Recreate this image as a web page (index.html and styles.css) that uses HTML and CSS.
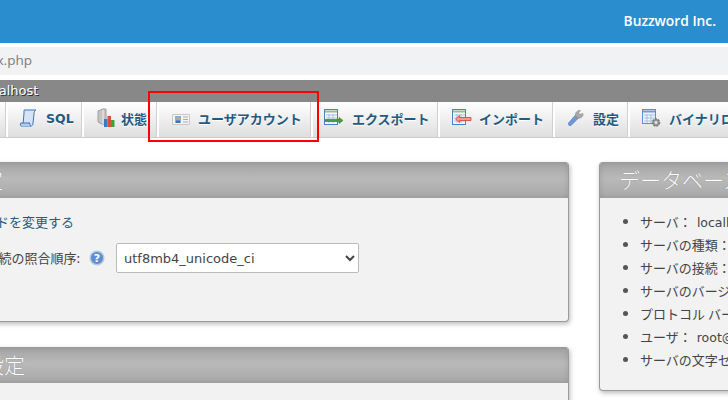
FILE: index.html
```html
<!DOCTYPE html>
<html lang="ja">
<head>
<meta charset="utf-8">
<title>phpMyAdmin</title>
<link rel="stylesheet" href="styles.css">
</head>
<body>
<div class="page">
  <header class="brand"><span>Buzzword Inc.</span></header>
  <div class="url"><span>index.php</span></div>
  <div class="crumb"><span>localhost</span></div>
  <nav class="tabs">
    <a class="tab tab-first"></a>
    <a class="tab tab-sql"><svg width="20" height="20" viewBox="0 0 20 20"><path d="M5 2h12c-1.500 1-2 2-2 4l-1 9c0 2-1 3-2 3H2c1.500-.5 2-1.500 2.200-3L5 5c.1-1.500 0-2.500 0-3z" fill="#d5e3f7" stroke="#3f74b8"/><path d="M2 18c-1-1-1-3 0-3h9c-.5 1-.5 2 1 3" fill="#b3cbec" stroke="#3f74b8"/></svg><b>SQL</b></a>
    <a class="tab tab-status"><svg width="20" height="20" viewBox="0 0 20 20"><path d="M2 3l5-2h3v15H6l-4-2z" fill="#c4c4c4" stroke="#a0a0a0"/><path d="M7 2v14" stroke="#eee"/><rect x="8" y="11" width="3.500" height="8" fill="#3b78c9"/><rect x="11.500" y="8" width="3.500" height="11" fill="#d8503a"/><rect x="15" y="12" width="3.500" height="7" fill="#42a03f"/></svg><b>状態</b></a>
    <a class="tab tab-user"><svg width="18" height="14" viewBox="0 0 18 14"><path d="M.5 2.500h17v10h-17z" fill="#f4f4f4" stroke="#c8c8c8"/><rect x="3" y="4" width="6" height="7" fill="#7fb0de"/><circle cx="6" cy="6.500" r="1.500" fill="#d9a074"/><rect x="4" y="8.500" width="4" height="2.500" fill="#3d75b4"/><path d="M11 5h5M11 7.500h5M11 10h5" stroke="#a9a9a9"/></svg><b>ユーザアカウント</b></a>
    <a class="tab tab-export"><svg width="20" height="18" viewBox="0 0 20 18"><rect x=".5" y=".5" width="13" height="15" fill="#f3f7fb" stroke="#4d80c4"/><path d="M1 2.500h12" stroke="#9ac27a" stroke-width="2"/><path d="M2 6h11M2 9h11M2 12h11M5 5v9M9 5v9" stroke="#a9c1de"/><path d="M1 10.500h14v-2l4 3-4 3v-2H1z" fill="#4d9b45" stroke="#2f7a2f" stroke-width=".6"/></svg><b>エクスポート</b></a>
    <a class="tab tab-import"><svg width="20" height="18" viewBox="0 0 20 18"><rect x=".5" y=".5" width="13" height="15" fill="#f3f7fb" stroke="#4d80c4"/><path d="M1 2.500h12" stroke="#9ac27a" stroke-width="2"/><path d="M2 6h11M2 9h11M2 12h11M5 5v9M9 5v9" stroke="#a9c1de"/><path d="M19 8.500H7.500v-2l-4 3.500 4 3.500v-2H19z" fill="#f29a9a" stroke="#d93a3a" stroke-width=".8"/></svg><b>インポート</b></a>
    <a class="tab tab-settings"><svg width="18" height="18" viewBox="0 0 18 18"><path d="M1.500 14l7-8 3 3-7.500 7.500c-2 .5-3-.5-2.500-2.500z" fill="#6f97d8" stroke="#4b74b8" stroke-width=".6"/><path d="M8.500 6.500c-.5-3 2-5.500 5-5l-2 2.500 1.500 1.500 3-1c.5 3-2.500 5.500-5.500 4.500z" fill="#a8a8a8" stroke="#868686" stroke-width=".6"/></svg><b>設定</b></a>
    <a class="tab tab-binlog"><svg width="20" height="19" viewBox="0 0 20 19"><rect x=".5" y=".5" width="13" height="14" fill="#eef3fa" stroke="#5b8ccc"/><path d="M1 2.500h12" stroke="#6f9bd6" stroke-width="2"/><path d="M2 6h11M2 9h11M2 12h11M5 5v9M9 5v9" stroke="#a9c1de"/><circle cx="14" cy="13.500" r="3.500" fill="#9a9a9a" stroke="#777" stroke-width="1.500" stroke-dasharray="2 1"/><circle cx="14" cy="13.500" r="1.300" fill="#eee"/></svg><b>バイナリログ</b></a>
  </nav>
  <main class="columns">
    <div class="col-left">
      <section class="panel panel-general">
        <h2>一般設定</h2>
        <div class="panel-body">
          <p class="link">パスワードを変更する</p>
          <form class="field">
            <label>サーバ接続の照合順序:</label>
            <svg class="help" width="16" height="16" viewBox="0 0 16 16"><circle cx="8" cy="8" r="6.800" fill="#5f8fd0" stroke="#b4c8e0" stroke-width="1.400"/><text x="8" y="11.500" text-anchor="middle" class="help-q">?</text></svg>
            <select><option>utf8mb4_unicode_ci</option></select>
          </form>
        </div>
      </section>
      <section class="panel panel-look">
        <h2>外観の設定</h2>
        <div class="panel-body"></div>
      </section>
    </div>
    <section class="panel panel-db">
      <h2>データベースサーバ</h2>
      <ul>
        <li>サーバ：<span class="val">localhost via TCP/IP</span></li>
        <li>サーバの種類：<span class="val">MariaDB</span></li>
        <li>サーバの接続：<span class="val">SSL は使われていません</span></li>
        <li>サーバのバージョン：<span class="val">10.4.21-MariaDB</span></li>
        <li>プロトコル バージョン：<span class="val">10</span></li>
        <li>ユーザ：<span class="val">root@localhost</span></li>
        <li>サーバの文字セット：<span class="val">UTF-8 Unicode</span></li>
      </ul>
    </section>
  </main>
  <div class="highlight"></div>
</div>
</body>
</html>
```
FILE: styles.css
```css
* { box-sizing: border-box; }
html, body { margin: 0; padding: 0; background: #fff; overflow: hidden; }
body { width: 728px; height: 400px; font-family: "Noto Sans CJK JP", "DejaVu Sans", sans-serif; }
.page { position: relative; width: 728px; height: 400px; overflow: hidden; }

.brand { height: 43px; background: #2a8dcd; display: flex; justify-content: flex-end; align-items: center; padding: 0 12px 0 0; color: #fff; }
.brand span { font: 600 13.800px "Open Sans", sans-serif; position: relative; top: -1px; }
.url { height: 28px; margin-top: 4px; background: #f1f2f4; display: flex; align-items: center; overflow: hidden; }
.url span { font: 13.500px "Open Sans", sans-serif; color: #7b7b7b; margin-left: -31px; position: relative; top: -1px; }
.crumb { height: 22px; margin-top: 5px; background: #888; display: flex; align-items: center; overflow: hidden; color: #fff; }
.crumb span { font: 13px "DejaVu Sans", sans-serif; margin-left: -20px; text-shadow: 1px 1px 0 #333; position: relative; top: -1px; }

.tabs { display: flex; height: 36px; background: linear-gradient(#fff, #dedede); border-bottom: 1px solid #ccc; overflow: hidden; }
.tab { flex: none; display: flex; align-items: center; height: 100%; padding-bottom: 3px; border-right: 2px solid #fff; box-shadow: inset -1px 0 0 #d0d0d0; color: #235a81; }
.tab b { font-size: 13px; font-weight: 700; white-space: nowrap; text-shadow: 0 1px 0 #fff; }
.tab-first { width: 8px; }
.tab-sql { width: 76px; padding-left: 11px; gap: 7px; }
.tab-sql b { font-family: "DejaVu Sans", sans-serif; font-size: 12.500px; }
.tab-status { width: 75px; padding-left: 12px; gap: 5px; }
.tab-user { width: 154px; padding-left: 13px; gap: 8px; }
.tab-user svg { margin-top: 1px; }
.tab-export { width: 127px; padding-left: 11px; gap: 8px; }
.tab-import { width: 115px; padding-left: 12px; gap: 7px; }
.tab-settings { width: 75px; padding-left: 12px; gap: 8px; }
.tab-binlog { width: 130px; padding-left: 12px; gap: 7px; }

.columns { display: flex; gap: 30px; padding-top: 24px; align-items: flex-start; }
.col-left { flex: none; width: 600px; margin-left: -31px; display: flex; flex-direction: column; gap: 25px; }
.panel { background: #f2f2f2; border: 1px solid #999; border-top: 0; border-radius: 4px; box-shadow: 1px 2px 5px rgba(0,0,0,.28); overflow: hidden; }
.panel h2 { margin: 0; height: 36px; display: flex; align-items: center; padding: 0 0 3px 19px; font-size: 21px; font-weight: 300; color: #fff; white-space: nowrap; overflow: hidden; background: linear-gradient(#a3a3a3, #b9b9b9 45%, #a9a9a9); box-shadow: inset 0 0 6px rgba(0,0,0,.12); text-shadow: 0 0 1px #777; }
.panel-general { height: 160px; }
.panel-general h2 { padding-left: 0; text-indent: -51px; }
.panel-look { height: 120px; }
.panel-look h2 { padding-left: 0; text-indent: -50px; }

.panel-body { position: relative; font-size: 13px; color: #444; }
.link { margin: 0; color: #235a81; position: relative; top: 14px; left: -26px; font-size: 13px; line-height: 20px; white-space: nowrap; }
.field { position: absolute; top: 45px; right: 209px; display: flex; align-items: center; white-space: nowrap; }
.field label { color: #444; font-size: 13px; position: relative; top: -1px; }
.help { margin-left: 9px; margin-right: 11px; }
.help-q { font: 700 11px "DejaVu Sans", sans-serif; fill: #fff; }
select { width: 243px; height: 30px; padding: 0 3px; font: 13px "DejaVu Sans", sans-serif; color: #444; background: #fff; border: 1px solid #bbb; border-radius: 2px; }
.panel-look .panel-body { height: 100px; }

.panel-db { flex: none; width: 300px; height: 229px; }
.panel-db ul { margin: 0; padding: 12px 0 0 40px; list-style: disc; font-size: 13px; color: #444; }
.panel-db li { height: 23px; line-height: 23px; white-space: nowrap; }
.panel-db li::marker { color: #555; }
.val { margin-left: 5px; font-family: "DejaVu Sans", "Noto Sans CJK JP", sans-serif; font-size: 12.500px; }

.highlight { position: absolute; left: 148px; top: 91px; width: 171px; height: 51px; border: 2px solid #f00; pointer-events: none; }
```
